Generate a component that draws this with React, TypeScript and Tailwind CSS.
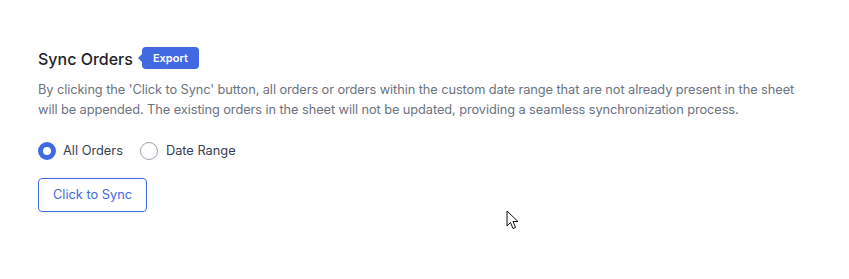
import React from "react";

export default function App() {
  return (
    <div className="relative w-[849px] h-[279px] bg-white" style={{ fontFamily: "Inter, 'Noto Sans', sans-serif" }}>
      <div className="pl-[38px] pt-[47px]">
        <div className="flex items-center h-[22px]">
          <h2 className="text-[16px] text-[#1f2328] font-medium leading-[21px] mt-[3px]">Sync Orders</h2>
          <div className="relative ml-[9px] h-[22px] px-[11px] rounded-[4px] bg-[#4169e1] text-white text-[11px] font-semibold leading-[22px]">
            <span className="absolute left-[-4px] top-[7px] w-0 h-0 border-y-[4px] border-y-transparent border-r-[4px] border-r-[#4169e1]"></span>
            Export
          </div>
        </div>
        <p className="mt-[11px] w-[770px] text-[12.8px] tracking-[-0.08px] leading-[19.5px] text-[#6b7280]">
          By clicking the 'Click to Sync' button, all orders or orders within the custom date range that are not already present in the sheet will be appended. The existing orders in the sheet will not be updated, providing a seamless synchronization process.
        </p>
        <div className="mt-[22px] flex items-center h-[20px]">
          <label className="flex items-center">
            <span className="w-[18px] h-[18px] rounded-full border-[5px] border-[#4169e1] bg-white"></span>
            <span className="ml-[7px] text-[12.8px] text-[#374151]">All Orders</span>
          </label>
          <label className="flex items-center ml-[17px]">
            <span className="w-[18px] h-[18px] rounded-full border border-[#9ca3af] bg-white"></span>
            <span className="ml-[8px] text-[12.8px] text-[#374151]">Date Range</span>
          </label>
        </div>
        <button className="mt-[17px] w-[109px] h-[34px] rounded-[4px] border border-[#4169e1] text-[#4169e1] text-[12.8px] bg-white">
          Click to Sync
        </button>
      </div>
      <svg className="absolute left-[506px] top-[210px]" width="13" height="20" viewBox="0 0 13 20">
        <path d="M1 1 L1 16 L4.5 12.5 L7 18.5 L9.5 17.5 L7 11.5 L12 11.5 Z" fill="white" stroke="#111" strokeWidth="1" strokeLinejoin="round" />
      </svg>
    </div>
  );
}
